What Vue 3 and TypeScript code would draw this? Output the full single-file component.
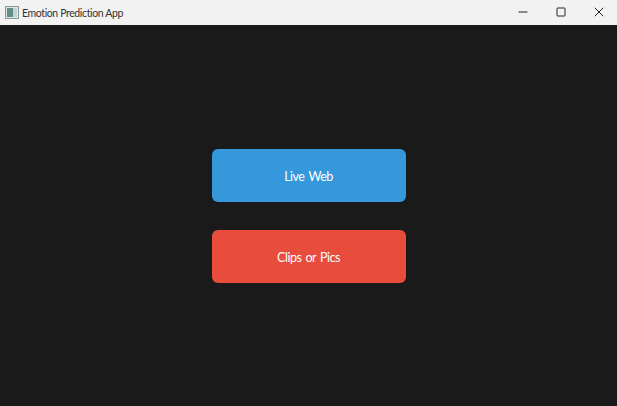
<script setup lang="ts">
const actions: { label: string; tone: string }[] = [
  { label: 'Live Web', tone: 'blue' },
  { label: 'Clips or Pics', tone: 'red' },
]
</script>

<template>
  <div class="window">
    <header class="titlebar">
      <div class="title-left">
        <svg class="app-icon" width="14" height="13" viewBox="0 0 14 13">
          <rect x="0.5" y="0.5" width="13" height="12" fill="#dfe6e6" stroke="#8a9a9c" />
          <rect x="2" y="2" width="6" height="9" fill="#5f8f88" />
          <rect x="8" y="2" width="4" height="9" fill="#c4d4d6" />
        </svg>
        <span class="title">Emotion Prediction App</span>
      </div>
      <div class="controls">
        <button class="control" aria-label="Minimize">
          <svg width="10" height="10" viewBox="0 0 10 10"><path d="M0.5 5H9.5" stroke="#222" stroke-width="1" fill="none" /></svg>
        </button>
        <button class="control" aria-label="Maximize">
          <svg width="10" height="10" viewBox="0 0 10 10"><rect x="1" y="1" width="8" height="8" rx="0.5" stroke="#222" stroke-width="1" fill="none" /></svg>
        </button>
        <button class="control" aria-label="Close">
          <svg width="10" height="10" viewBox="0 0 10 10"><path d="M0.8 0.8L9.2 9.2M9.2 0.8L0.8 9.2" stroke="#222" stroke-width="1" fill="none" /></svg>
        </button>
      </div>
    </header>
    <main class="content">
      <button v-for="a in actions" :key="a.label" class="action" :class="a.tone">{{ a.label }}</button>
    </main>
  </div>
</template>

<style scoped>
.window {
  width: 617px;
  height: 406px;
  display: flex;
  flex-direction: column;
  background: #1a1a1a;
  overflow: hidden;
}
.titlebar {
  height: 25px;
  flex: none;
  background: #f2f2f2;
  display: flex;
  align-items: center;
  justify-content: space-between;
}
.title-left {
  display: flex;
  align-items: center;
  gap: 3px;
  padding-left: 5px;
}
.app-icon {
  display: block;
}
.title {
  font: 10.5px "Lato", sans-serif;
  color: #333;
  letter-spacing: -0.38px;
}
.controls {
  display: flex;
  gap: 2px;
}
.control {
  width: 36px;
  height: 25px;
  padding: 0 0 2px;
  border: 0;
  background: none;
  display: flex;
  align-items: center;
  justify-content: center;
}
.content {
  flex: 1;
  display: flex;
  flex-direction: column;
  align-items: center;
  gap: 28px;
  padding-top: 124px;
}
.action {
  width: 194px;
  height: 53px;
  border: 0;
  border-radius: 6px;
  color: #fff;
  font: 12.5px "Lato", sans-serif;
  letter-spacing: -0.5px;
  word-spacing: 1.5px;
  padding: 1px 0 0;
}
.blue {
  background: #3498db;
}
.red {
  background: #e74c3c;
}
</style>
